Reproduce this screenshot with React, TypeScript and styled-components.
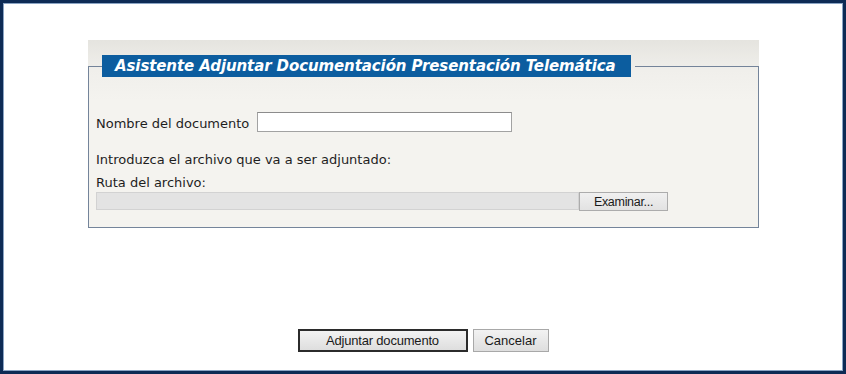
import styled, { createGlobalStyle } from "styled-components";

const GlobalStyle = createGlobalStyle`
    html, body {
        margin: 0;
        padding: 0;
        background: #ffffff;
    }
    body {
        font-family: "DejaVu Sans", Verdana, sans-serif;
        color: #1e1e1e;
    }
`;

const Frame = styled.div`
    box-sizing: border-box;
    width: 846px;
    height: 374px;
    border: 3px solid #0d2b55;
    box-shadow: inset 0 0 0 1px #8aa4c4;
    background: #ffffff;
    display: flex;
    flex-direction: column;
`;

const Panel = styled.div`
    box-sizing: border-box;
    width: 671px;
    margin: 37px 0 0 85px;
    padding-top: 15px;
    background: linear-gradient(#e5e4df 0px, #f0efeb 30px, #f4f3ef 60px);
`;

const Fieldset = styled.fieldset`
    margin: 0;
    padding: 0 7px 16px;
    border: 1px solid #74849a;
    min-width: 0;
`;

const Legend = styled.legend`
    margin-left: 6px;
    padding: 0 4px 0 0;
`;

const Title = styled.span`
    display: block;
    height: 22px;
    line-height: 22px;
    padding: 0 15px 0 13px;
    background: #0c5d9f;
    color: #ffffff;
    font-family: "DejaVu Sans", Verdana, sans-serif;
    font-weight: bold;
    font-style: italic;
    font-size: 15px;
    letter-spacing: -0.1px;
    white-space: nowrap;
`;

const NameRow = styled.div`
    display: flex;
    align-items: flex-end;
    gap: 8px;
    margin-top: 35px;
`;

const Label = styled.div<{ $gap?: number }>`
    font-size: 13px;
    line-height: 16px;
    margin-top: ${(p) => p.$gap ?? 0}px;
    white-space: nowrap;
`;

const TextInput = styled.input`
    box-sizing: border-box;
    width: 255px;
    height: 20px;
    margin: 0;
    padding: 0 3px;
    border: 1px solid #a2a2a2;
    border-top-color: #8c8c8c;
    background: #ffffff;
    font-family: "DejaVu Sans", Verdana, sans-serif;
    font-size: 13px;
`;

const FileRow = styled.div`
    display: flex;
    margin-top: 1px;
`;

const FilePath = styled.div`
    box-sizing: border-box;
    width: 483px;
    height: 18px;
    background: #e3e3e3;
    border: 1px solid #d2d2d2;
`;

const BrowseButton = styled.button`
    box-sizing: border-box;
    width: 89px;
    height: 19px;
    margin: 0;
    padding: 0;
    border: 1px solid #acacac;
    background: linear-gradient(#f0f0f0, #e2e2e2);
    font-family: "Liberation Sans", Arial, sans-serif;
    font-size: 12.5px;
    color: #1a1a1a;
    letter-spacing: -0.3px;
`;

const Actions = styled.div`
    display: flex;
    justify-content: center;
    gap: 5px;
    margin-top: 101px;
`;

const ActionButton = styled.button<{ $primary?: boolean; $width: number }>`
    box-sizing: border-box;
    width: ${(p) => p.$width}px;
    height: 23px;
    margin: 0;
    padding: 0;
    border: ${(p) => (p.$primary ? "2px solid #2b2b2b" : "1px solid #a8a8a8")};
    background: linear-gradient(#f2f2f2, #dedede);
    font-family: "Liberation Sans", Arial, sans-serif;
    font-size: 13px;
    color: #1a1a1a;
    letter-spacing: ${(p) => (p.$primary ? "-0.2px" : "0")};
`;

export default function App() {
    return (
        <>
            <GlobalStyle />
            <Frame>
                <Panel>
                    <Fieldset>
                        <Legend>
                            <Title>Asistente Adjuntar Documentación Presentación Telemática</Title>
                        </Legend>
                        <NameRow>
                            <Label>Nombre del documento</Label>
                            <TextInput type="text" />
                        </NameRow>
                        <Label $gap={20}>Introduzca el archivo que va a ser adjuntado:</Label>
                        <Label $gap={7}>Ruta del archivo:</Label>
                        <FileRow>
                            <FilePath />
                            <BrowseButton>Examinar...</BrowseButton>
                        </FileRow>
                    </Fieldset>
                </Panel>
                <Actions>
                    <ActionButton $primary $width={170}>Adjuntar documento</ActionButton>
                    <ActionButton $width={76}>Cancelar</ActionButton>
                </Actions>
            </Frame>
        </>
    );
}
